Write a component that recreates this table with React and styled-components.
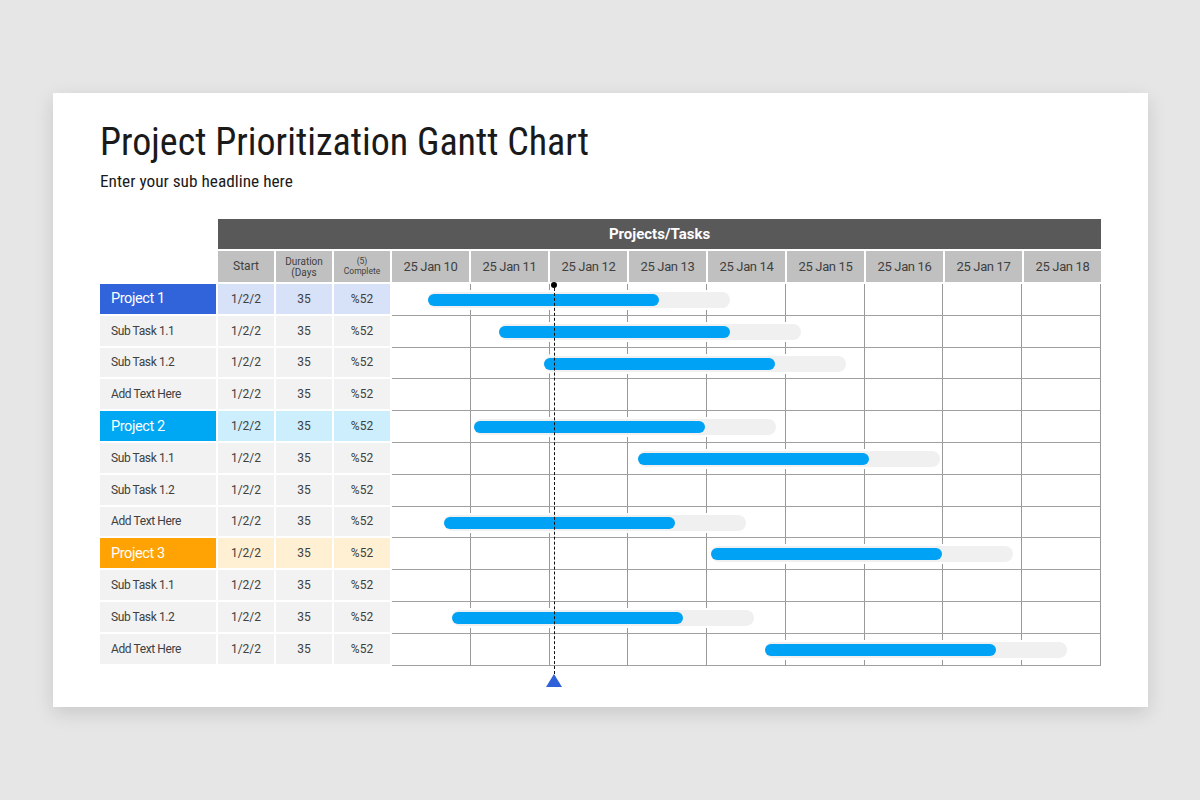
import React from "react";
import styled, { createGlobalStyle, css } from "styled-components";

const GlobalStyle = createGlobalStyle`
  body {
    margin: 0;
    background: #e7e6e7;
    font-family: Roboto, "Noto Sans", sans-serif;
  }
`;

const dates = [10, 11, 12, 13, 14, 15, 16, 17, 18].map((d) => `25 Jan ${d}`);

// bar start = px from the left of the timeline
const rows = [
  { name: "Project 1", kind: "blue", bar: 36 },
  { name: "Sub Task 1.1", bar: 107 },
  { name: "Sub Task 1.2", bar: 152 },
  { name: "Add Text Here" },
  { name: "Project 2", kind: "sky", bar: 82 },
  { name: "Sub Task 1.1", bar: 246 },
  { name: "Sub Task 1.2" },
  { name: "Add Text Here", bar: 52 },
  { name: "Project 3", kind: "orange", bar: 319 },
  { name: "Sub Task 1.1" },
  { name: "Sub Task 1.2", bar: 60 },
  { name: "Add Text Here", bar: 373 },
];

const palette = {
  blue: { strong: "#3164db", soft: "#d7e1f7" },
  sky: { strong: "#00a7f2", soft: "#cdeefd" },
  orange: { strong: "#ffa305", soft: "#fff0d3" },
};

const Page = styled.div`
  padding: 93px 0 0 53px;
  height: 800px;
  box-sizing: border-box;
`;

const Slide = styled.div`
  width: 1095px;
  height: 614px;
  background: #fff;
  box-shadow: 0 6px 18px rgba(0, 0, 0, 0.13);
  padding: 27px 47px 0;
  box-sizing: border-box;
`;

const Title = styled.h1`
  margin: 0;
  font-size: 38px;
  line-height: 44px;
  font-weight: 400;
  font-stretch: condensed;
  color: #1a1a1a;
`;

const Subtitle = styled.p`
  margin: 7px 0 0;
  font-size: 17.3px;
  line-height: 21px;
  font-stretch: condensed;
  color: #1a1a1a;
`;

const Head = styled.div`
  margin-top: 27px;
  display: grid;
  grid-template-columns: 116px repeat(3, 56px) repeat(9, 77px);
  grid-template-rows: 30px 31px;
  gap: 2px;
`;

const Banner = styled.div`
  grid-column: 2 / -1;
  background: #595959;
  color: #fff;
  font-weight: 700;
  font-size: 15px;
  display: flex;
  align-items: center;
  justify-content: center;
`;

const HeadCell = styled.div`
  background: #c0c0c0;
  color: #404040;
  display: flex;
  align-items: center;
  justify-content: center;
  text-align: center;
  font-size: ${(p) => p.$size || 13}px;
  line-height: ${(p) => (p.$size ? p.$size + 1 : 14)}px;
  letter-spacing: ${(p) => (p.$size ? 0 : -0.35)}px;
  grid-column: ${(p) => (p.$first ? 2 : "auto")};
`;

const Body = styled.div`
  margin-top: 2px;
  display: flex;
  gap: 2px;
`;

const Table = styled.div`
  display: grid;
  grid-template-columns: 116px repeat(3, 56px);
  grid-auto-rows: 29.8px;
  gap: 2px;
  width: 290px;
`;

const NameCell = styled.div`
  display: flex;
  align-items: center;
  padding-left: 11px;
  font-size: 12px;
  letter-spacing: -0.4px;
  color: #404040;
  background: #f2f2f2;
  ${(p) =>
    p.$kind &&
    css`
      background: ${palette[p.$kind].strong};
      color: #fff;
      font-size: 14.5px;
    `}
`;

const DataCell = styled.div`
  display: flex;
  align-items: center;
  justify-content: center;
  font-size: 12px;
  color: #404040;
  background: ${(p) => (p.$kind ? palette[p.$kind].soft : "#f2f2f2")};
`;

const Chart = styled.div`
  position: relative;
  width: 709px;
`;

const ChartRow = styled.div`
  position: relative;
  display: flex;
  height: 31.8px;
  box-sizing: border-box;
  border-bottom: 1px solid #a0a0a0;
`;

const Slot = styled.div`
  flex: 1;
  border-right: 1px solid #999;
`;

const Track = styled.div`
  position: absolute;
  top: 8px;
  width: 302px;
  height: 16px;
  border-radius: 8px;
  background: #f0f0f0;
  box-shadow: 0 0 0 2px #fff;
  z-index: 1;
`;

const Fill = styled.div`
  position: absolute;
  left: 0;
  top: 2px;
  width: 231px;
  height: 12px;
  border-radius: 6px;
  background: #00a2f5;
`;

const Marker = styled.div`
  position: absolute;
  left: 162px;
  top: 0;
  width: 0;
  z-index: 2;
`;

const Dot = styled.div`
  position: absolute;
  left: -3px;
  top: -2px;
  width: 6px;
  height: 6px;
  border-radius: 50%;
  background: #000;
`;

const Dash = styled.div`
  position: absolute;
  left: 0;
  top: 4px;
  height: 386px;
  border-left: 1px dashed #111;
`;

const Arrow = styled.div`
  position: absolute;
  left: -8px;
  top: 390px;
  width: 0;
  height: 0;
  border-left: 8px solid transparent;
  border-right: 8px solid transparent;
  border-bottom: 13px solid #2f62d9;
`;

export default function App() {
  return (
    <>
      <GlobalStyle />
      <Page>
        <Slide>
          <Title>Project Prioritization Gantt Chart</Title>
          <Subtitle>Enter your sub headline here</Subtitle>

          <Head>
            <Banner>Projects/Tasks</Banner>
            <HeadCell $first $size={12}>Start</HeadCell>
            <HeadCell $size={10}>
              Duration
              <br />
              (Days
            </HeadCell>
            <HeadCell $size={8.5}>
              (5)
              <br />
              Complete
            </HeadCell>
            {dates.map((d) => (
              <HeadCell key={d}>{d}</HeadCell>
            ))}
          </Head>

          <Body>
            <Table>
              {rows.map((r, i) => (
                <React.Fragment key={i}>
                  <NameCell $kind={r.kind}>{r.name}</NameCell>
                  <DataCell $kind={r.kind}>1/2/2</DataCell>
                  <DataCell $kind={r.kind}>35</DataCell>
                  <DataCell $kind={r.kind}>%52</DataCell>
                </React.Fragment>
              ))}
            </Table>

            <Chart>
              {rows.map((r, i) => (
                <ChartRow key={i}>
                  {dates.map((d) => (
                    <Slot key={d} />
                  ))}
                  {r.bar != null && (
                    <Track style={{ left: r.bar }}>
                      <Fill />
                    </Track>
                  )}
                </ChartRow>
              ))}
              <Marker>
                <Dot />
                <Dash />
                <Arrow />
              </Marker>
            </Chart>
          </Body>
        </Slide>
      </Page>
    </>
  );
}
